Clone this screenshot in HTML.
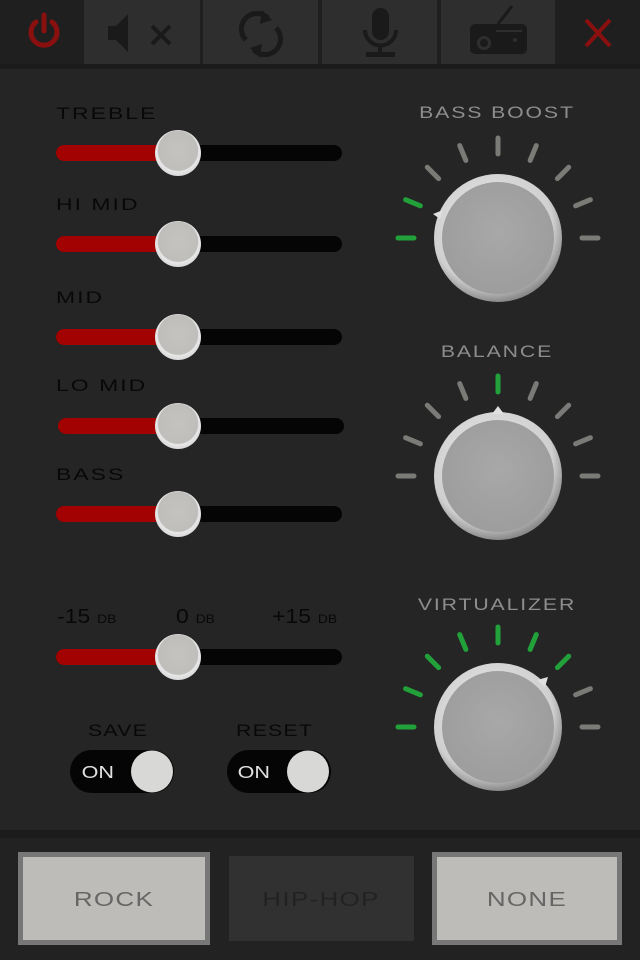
<!DOCTYPE html>
<html><head><meta charset="utf-8"><style>
html,body{margin:0;padding:0;background:#252525;width:640px;height:960px;overflow:hidden;font-family:"Liberation Sans",sans-serif}
</style></head><body>
<svg width="640" height="960" viewBox="0 0 640 960" xmlns="http://www.w3.org/2000/svg" style="display:block">
<defs>
<radialGradient id="kr" cx="45%" cy="40%" r="60%"><stop offset="0" stop-color="#eeeeee"/><stop offset="0.8" stop-color="#cfcfcf"/><stop offset="1" stop-color="#8a8a8a"/></radialGradient>
<radialGradient id="kf" cx="50%" cy="45%" r="60%"><stop offset="0" stop-color="#a8a8a8"/><stop offset="1" stop-color="#9c9c9c"/></radialGradient>
<radialGradient id="th" cx="50%" cy="45%" r="55%"><stop offset="0" stop-color="#c4c3c0"/><stop offset="0.78" stop-color="#bfbebb"/><stop offset="0.82" stop-color="#e8e8e8"/><stop offset="1" stop-color="#d8d8d8"/></radialGradient>
</defs>
<rect width="640" height="960" fill="#252525"/>
<rect x="0" y="0" width="640" height="64" fill="#1f1f1f"/>
<rect x="0" y="64" width="640" height="5" fill="#1b1b1b"/>
<rect x="84" y="0" width="116" height="64" fill="#2e2e2e"/>
<rect x="203" y="0" width="115" height="64" fill="#2e2e2e"/>
<rect x="322" y="0" width="115" height="64" fill="#2e2e2e"/>
<rect x="441" y="0" width="114" height="64" fill="#2e2e2e"/>
<g stroke="#8a1010" stroke-width="5" fill="none" stroke-linecap="round"><path d="M36 22 A13 13 0 1 0 52 22"/><line x1="44" y1="15" x2="44" y2="31"/></g>
<path d="M108 26 h8 l12 -12 v38 l-12 -12 h-8 z" fill="#1a1a1a"/>
<g stroke="#1a1a1a" stroke-width="4"><line x1="152" y1="26" x2="170" y2="44"/><line x1="170" y1="26" x2="152" y2="44"/></g>
<g stroke="#1a1a1a" stroke-width="5" fill="none"><path d="M246 40 A15 15 0 0 1 268 18"/><path d="M276 28 A15 15 0 0 1 254 50"/></g>
<path d="M262 10 l10 10 l-12 4 z M260 58 l-10 -10 l12 -4 z" fill="#1a1a1a"/>
<rect x="372" y="8" width="17" height="32" rx="8.5" fill="#1a1a1a"/>
<path d="M365 30 a15 15 0 0 0 31 0" stroke="#1a1a1a" stroke-width="4" fill="none"/>
<line x1="380" y1="45" x2="380" y2="54" stroke="#1a1a1a" stroke-width="4"/>
<rect x="366" y="52" width="29" height="5" fill="#1a1a1a"/>
<line x1="498" y1="24" x2="512" y2="6" stroke="#1a1a1a" stroke-width="3"/>
<rect x="470" y="24" width="57" height="30" rx="5" fill="#1a1a1a"/>
<circle cx="484" cy="43" r="7" fill="#2e2e2e"/><circle cx="484" cy="43" r="4" fill="#1a1a1a"/>
<rect x="496" y="30" width="26" height="2" fill="#2e2e2e"/><circle cx="515" cy="40" r="2" fill="#2e2e2e"/>
<g stroke="#8a1010" stroke-width="4"><line x1="586" y1="20" x2="610" y2="46"/><line x1="610" y1="20" x2="586" y2="46"/></g>

<g font-size="17" fill="#080808" letter-spacing="1.5" transform="scale(1.35,1)">
<text x="41.5" y="119">TREBLE</text>
<text x="41.5" y="210">HI MID</text>
<text x="41.5" y="303">MID</text>
<text x="41.5" y="391">LO MID</text>
<text x="41.5" y="480">BASS</text>
</g>
<g>
<rect x="56" y="145" width="286" height="16" rx="8" fill="#050505"/><rect x="56" y="145" width="120" height="16" rx="8" fill="#a30202"/>
<rect x="56" y="236" width="286" height="16" rx="8" fill="#050505"/><rect x="56" y="236" width="120" height="16" rx="8" fill="#a30202"/>
<rect x="56" y="329" width="286" height="16" rx="8" fill="#050505"/><rect x="56" y="329" width="120" height="16" rx="8" fill="#a30202"/>
<rect x="58" y="418" width="286" height="16" rx="8" fill="#050505"/><rect x="58" y="418" width="118" height="16" rx="8" fill="#a30202"/>
<rect x="56" y="506" width="286" height="16" rx="8" fill="#050505"/><rect x="56" y="506" width="120" height="16" rx="8" fill="#a30202"/>
<rect x="56" y="649" width="286" height="16" rx="8" fill="#050505"/><rect x="56" y="649" width="120" height="16" rx="8" fill="#a30202"/>
<g fill="url(#th)">
<circle cx="178" cy="153" r="23"/><circle cx="178" cy="244" r="23"/><circle cx="178" cy="337" r="23"/><circle cx="178" cy="426" r="23"/><circle cx="178" cy="514" r="23"/><circle cx="178" cy="657" r="23"/>
</g>
</g>
<g fill="#080808" font-size="20">
<text x="57" y="623" transform="translate(-8.55,0) scale(1.15,1)">-15<tspan font-size="12" dx="6">DB</tspan></text>
<text x="176" y="623" transform="translate(-26.4,0) scale(1.15,1)">0<tspan font-size="12" dx="6">DB</tspan></text>
<text x="272" y="623" transform="translate(-40.8,0) scale(1.15,1)">+15<tspan font-size="12" dx="6">DB</tspan></text>
</g>
<g font-size="17" fill="#080808" letter-spacing="1" transform="scale(1.25,1)">
<text x="70.4" y="736">SAVE</text><text x="188.8" y="736">RESET</text>
</g>
<rect x="70" y="750" width="104" height="43" rx="21.5" fill="#050505"/>
<rect x="227" y="750" width="104" height="43" rx="21.5" fill="#050505"/>
<circle cx="152" cy="771.5" r="21" fill="#d8d8d6"/><circle cx="308" cy="771.5" r="21" fill="#d8d8d6"/>
<g font-size="18" fill="#e0e0e0" transform="scale(1.2,1)"><text x="68" y="778">ON</text><text x="198" y="778">ON</text></g>

<g font-size="17" fill="#8d8d8d" letter-spacing="1.5" text-anchor="middle">
<text x="497" y="118" transform="translate(-124.25,0) scale(1.25,1)">BASS BOOST</text>
<text x="497" y="357" transform="translate(-124.25,0) scale(1.25,1)">BALANCE</text>
<text x="497" y="610" transform="translate(-124.25,0) scale(1.25,1)">VIRTUALIZER</text>
</g>
<g stroke-width="5" stroke-linecap="round">
<g transform="translate(498,238)">
<line x1="-84" y1="0" x2="-100" y2="0" stroke="#22a03a" transform="rotate(0)"/>
<line x1="-84" y1="0" x2="-100" y2="0" stroke="#22a03a" transform="rotate(22.5)"/>
<line x1="-84" y1="0" x2="-100" y2="0" stroke="#7a7a77" transform="rotate(45)"/>
<line x1="-84" y1="0" x2="-100" y2="0" stroke="#7a7a77" transform="rotate(67.5)"/>
<line x1="-84" y1="0" x2="-100" y2="0" stroke="#7a7a77" transform="rotate(90)"/>
<line x1="-84" y1="0" x2="-100" y2="0" stroke="#7a7a77" transform="rotate(112.5)"/>
<line x1="-84" y1="0" x2="-100" y2="0" stroke="#7a7a77" transform="rotate(135)"/>
<line x1="-84" y1="0" x2="-100" y2="0" stroke="#7a7a77" transform="rotate(157.5)"/>
<line x1="-84" y1="0" x2="-100" y2="0" stroke="#7a7a77" transform="rotate(180)"/>
</g>
<g transform="translate(498,476)">
<line x1="-84" y1="0" x2="-100" y2="0" stroke="#7a7a77" transform="rotate(0)"/>
<line x1="-84" y1="0" x2="-100" y2="0" stroke="#7a7a77" transform="rotate(22.5)"/>
<line x1="-84" y1="0" x2="-100" y2="0" stroke="#7a7a77" transform="rotate(45)"/>
<line x1="-84" y1="0" x2="-100" y2="0" stroke="#7a7a77" transform="rotate(67.5)"/>
<line x1="-84" y1="0" x2="-100" y2="0" stroke="#22a03a" transform="rotate(90)"/>
<line x1="-84" y1="0" x2="-100" y2="0" stroke="#7a7a77" transform="rotate(112.5)"/>
<line x1="-84" y1="0" x2="-100" y2="0" stroke="#7a7a77" transform="rotate(135)"/>
<line x1="-84" y1="0" x2="-100" y2="0" stroke="#7a7a77" transform="rotate(157.5)"/>
<line x1="-84" y1="0" x2="-100" y2="0" stroke="#7a7a77" transform="rotate(180)"/>
</g>
<g transform="translate(498,727)">
<line x1="-84" y1="0" x2="-100" y2="0" stroke="#22a03a" transform="rotate(0)"/>
<line x1="-84" y1="0" x2="-100" y2="0" stroke="#22a03a" transform="rotate(22.5)"/>
<line x1="-84" y1="0" x2="-100" y2="0" stroke="#22a03a" transform="rotate(45)"/>
<line x1="-84" y1="0" x2="-100" y2="0" stroke="#22a03a" transform="rotate(67.5)"/>
<line x1="-84" y1="0" x2="-100" y2="0" stroke="#22a03a" transform="rotate(90)"/>
<line x1="-84" y1="0" x2="-100" y2="0" stroke="#22a03a" transform="rotate(112.5)"/>
<line x1="-84" y1="0" x2="-100" y2="0" stroke="#22a03a" transform="rotate(135)"/>
<line x1="-84" y1="0" x2="-100" y2="0" stroke="#7a7a77" transform="rotate(157.5)"/>
<line x1="-84" y1="0" x2="-100" y2="0" stroke="#7a7a77" transform="rotate(180)"/>
</g>
</g>
<g>
<circle cx="498" cy="238" r="64" fill="url(#kr)"/><circle cx="498" cy="238" r="56" fill="url(#kf)"/>
<path d="M433 214 l10 -4 l-3 9 z" fill="#e0e0e0"/>
<circle cx="498" cy="476" r="64" fill="url(#kr)"/><circle cx="498" cy="476" r="56" fill="url(#kf)"/>
<path d="M492 414 l6 -8 l6 8 z" fill="#e0e0e0"/>
<circle cx="498" cy="727" r="64" fill="url(#kr)"/><circle cx="498" cy="727" r="56" fill="url(#kf)"/>
<path d="M537 680 l11 -3 l-3 10 z" fill="#e0e0e0"/>
</g>
<rect x="0" y="830" width="640" height="8" fill="#1c1c1c"/>
<rect x="0" y="838" width="640" height="122" fill="#222"/>
<rect x="18" y="852" width="192" height="93" fill="#777"/><rect x="23" y="857" width="182" height="83" fill="#bdbcb8"/>
<rect x="229" y="856" width="185" height="85" fill="#313131"/>
<rect x="432" y="852" width="190" height="93" fill="#777"/><rect x="437" y="857" width="180" height="83" fill="#bdbcb8"/>
<g font-size="20" text-anchor="middle" letter-spacing="1">
<text x="114" y="906" fill="#666" transform="translate(-34.2,0) scale(1.3,1)">ROCK</text>
<text x="321" y="906" fill="#222" transform="translate(-96.3,0) scale(1.3,1)">HIP-HOP</text>
<text x="527" y="906" fill="#666" transform="translate(-158.1,0) scale(1.3,1)">NONE</text>
</g>
</svg>
</body></html>
